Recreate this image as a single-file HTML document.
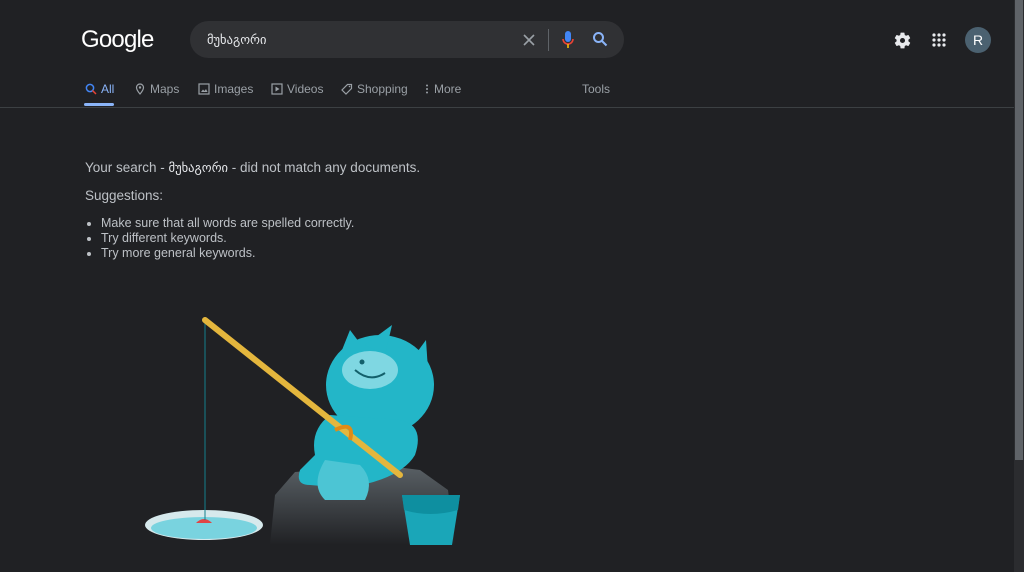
<!DOCTYPE html>
<html><head><meta charset="utf-8"><style>
*{margin:0;padding:0;box-sizing:border-box}
body{width:1024px;height:572px;background:#202124;font-family:"Liberation Sans",Arial,sans-serif;color:#bdc1c6;position:relative;overflow:hidden}
.logo{position:absolute;left:81px;top:26px;font-size:24px;color:#fff;letter-spacing:-0.8px}
.sb{position:absolute;left:190px;top:21px;width:434px;height:37px;background:#303134;border-radius:19px}
.q{position:absolute;left:17px;top:11px;font-size:12.5px;color:#e8eaed;font-family:"DejaVu Sans",sans-serif}
.tab{position:absolute;top:82px;font-size:12px;color:#9aa0a6;display:flex;align-items:center;gap:4px}
.line{position:absolute;left:0;top:107px;width:1014px;height:1px;background:#3c4043}
.txt{position:absolute;left:85px;font-size:13.5px;color:#bdc1c6}
ul{position:absolute;left:101px;top:216px;font-size:12.5px;color:#bdc1c6;line-height:15px;list-style:disc}
.scroll{position:absolute;left:1014px;top:0;width:10px;height:572px;background:#2b2c2f}
.thumb{position:absolute;left:1015px;top:0;width:8px;height:460px;background:#5f6368}
</style></head><body>
<div class="logo">Google</div>
<div class="sb"><div class="q">მუხაგორი</div>
<svg style="position:absolute;left:332px;top:12px" width="14" height="14"><path d="M2 2L12 12M12 2L2 12" stroke="#9aa0a6" stroke-width="1.6"/></svg>
<div style="position:absolute;left:358px;top:8px;width:1px;height:22px;background:#5f6368"></div>
<svg style="position:absolute;left:371px;top:9px" width="14" height="20"><rect x="4" y="1" width="6" height="11" rx="3" fill="#4285f4"/><path d="M2 9a5 5 0 0 0 10 0" stroke="#ea4335" stroke-width="1.6" fill="none"/><path d="M7 14v4" stroke="#fbbc05" stroke-width="1.6"/></svg>
<svg style="position:absolute;left:402px;top:10px" width="16" height="16"><circle cx="6.5" cy="6.5" r="4.5" stroke="#8ab4f8" stroke-width="2" fill="none"/><path d="M10 10l4.5 4.5" stroke="#8ab4f8" stroke-width="2"/></svg>
</div>
<svg style="position:absolute;left:893px;top:31px" width="19" height="19" viewBox="0 0 24 24"><path fill="#e8eaed" d="M19.4 13c.04-.33.06-.66.06-1s-.02-.67-.06-1l2.1-1.650c.2-.15.25-.42.12-.64l-2-3.460c-.12-.22-.39-.3-.61-.22l-2.490 1c-.52-.4-1.080-.73-1.690-.98l-.38-2.650A.49.49 0 0 0 14 2h-4c-.25 0-.46.18-.49.42l-.38 2.650c-.61.25-1.170.59-1.690.98l-2.490-1a.5.5 0 0 0-.61.22l-2 3.460c-.13.22-.07.49.12.64L4.570 11c-.04.33-.07.67-.07 1s.03.67.07 1l-2.110 1.650c-.19.15-.24.42-.12.64l2 3.460c.12.22.39.3.61.22l2.490-1c.52.4 1.080.73 1.690.98l.38 2.650c.03.24.24.42.49.42h4c.25 0 .46-.18.49-.42l.38-2.650c.61-.25 1.170-.59 1.690-.98l2.490 1c.23.09.49 0 .61-.22l2-3.460c.12-.22.07-.49-.12-.64z"/><circle cx="12" cy="12" r="3.2" fill="#202124"/></svg>
<svg style="position:absolute;left:932px;top:33px" width="14" height="14"><g fill="#e8eaed"><circle cx="2" cy="2" r="1.6"/><circle cx="7" cy="2" r="1.6"/><circle cx="12" cy="2" r="1.6"/><circle cx="2" cy="7" r="1.6"/><circle cx="7" cy="7" r="1.6"/><circle cx="12" cy="7" r="1.6"/><circle cx="2" cy="12" r="1.6"/><circle cx="7" cy="12" r="1.6"/><circle cx="12" cy="12" r="1.6"/></g></svg>
<div style="position:absolute;left:965px;top:27px;width:26px;height:26px;border-radius:50%;background:#4b6170;color:#fff;font-size:14px;text-align:center;line-height:26px">R</div>

<div class="tab" style="left:85px;color:#8ab4f8"><svg width="12" height="12"><circle cx="5" cy="5" r="3.6" stroke="#4285f4" stroke-width="1.5" fill="none"/><path d="M7.5 7.5l3.5 3.5" stroke="#ea4335" stroke-width="1.5"/></svg>All</div>
<div style="position:absolute;left:84px;top:103px;width:30px;height:3px;background:#8ab4f8;border-radius:2px"></div>
<div class="tab" style="left:134px"><svg width="12" height="12"><path d="M6 11C3 7.5 2.5 6 2.5 4.5a3.5 3.5 0 0 1 7 0C9.5 6 9 7.5 6 11z" stroke="#9aa0a6" fill="none" stroke-width="1.2"/><circle cx="6" cy="4.5" r="1.2" fill="#9aa0a6"/></svg>Maps</div>
<div class="tab" style="left:198px"><svg width="12" height="12"><rect x="1" y="1" width="10" height="10" stroke="#9aa0a6" fill="none" stroke-width="1.2"/><path d="M3 9l2-2.5 1.5 1.5L8 6l1.5 3z" fill="#9aa0a6"/></svg>Images</div>
<div class="tab" style="left:271px"><svg width="12" height="12"><rect x="1" y="1" width="10" height="10" stroke="#9aa0a6" fill="none" stroke-width="1.2"/><path d="M4.5 3.5v5l4-2.5z" fill="#9aa0a6"/></svg>Videos</div>
<div class="tab" style="left:341px"><svg width="12" height="12"><path d="M6.5 1.5H10.5V5.5L5 11 1 7z" stroke="#9aa0a6" fill="none" stroke-width="1.2"/><circle cx="8.5" cy="3.5" r=".8" fill="#9aa0a6"/></svg>Shopping</div>
<div class="tab" style="left:424px"><svg width="6" height="12"><g fill="#9aa0a6"><circle cx="3" cy="2.5" r="1"/><circle cx="3" cy="6" r="1"/><circle cx="3" cy="9.5" r="1"/></g></svg>More</div>
<div class="tab" style="left:582px">Tools</div>
<div class="line"></div>

<div class="txt" style="top:160px">Your search - <span style="color:#e8eaed;font-family:'DejaVu Sans',sans-serif;font-size:12.5px">მუხაგორი</span> - did not match any documents.</div>
<div class="txt" style="top:188px">Suggestions:</div>
<ul><li>Make sure that all words are spelled correctly.</li><li>Try different keywords.</li><li>Try more general keywords.</li></ul>

<svg style="position:absolute;left:130px;top:310px" width="340" height="240">
<defs><linearGradient id="r" x1="0" y1="0" x2="0" y2="1"><stop offset="0" stop-color="#5a6166"/><stop offset="1" stop-color="#202124"/></linearGradient></defs>
<path d="M145 185 L165 162 L250 155 L290 160 L318 180 L325 235 L140 235z" fill="url(#r)"/>
<ellipse cx="74" cy="215" rx="59" ry="15" fill="#d6e9ec"/>
<ellipse cx="74" cy="218" rx="53" ry="11" fill="#79d3df"/>
<path d="M66 213 Q74 205 82 213z" fill="#e04545"/>
<line x1="75" y1="10" x2="75" y2="210" stroke="#13808d" stroke-width="1"/>
<ellipse cx="250" cy="75" rx="54" ry="50" fill="#23b6c8"/>
<path d="M235 35 L262 15 L255 45z" fill="#23b6c8"/><path d="M285 45 L296 30 L298 60z" fill="#23b6c8"/><path d="M212 40 L220 20 L235 40z" fill="#23b6c8"/>
<ellipse cx="240" cy="60" rx="28" ry="19" fill="#7fd7e2"/>
<path d="M225 60 Q240 73 255 63" stroke="#13606b" stroke-width="2" fill="none"/>
<circle cx="232" cy="52" r="2.5" fill="#13606b"/>
<path d="M200 105 Q180 120 185 145 L170 160 Q165 175 180 175 L215 178 Q270 170 285 145 Q295 115 270 110z" fill="#23b6c8"/>
<path d="M195 150 Q180 175 195 190 L235 190 Q245 170 230 155z" fill="#4cc5d4"/>
<line x1="75" y1="10" x2="270" y2="165" stroke="#e4b63d" stroke-width="6" stroke-linecap="round"/>
<path d="M205 120 Q225 110 220 130" stroke="#e08b16" stroke-width="4" fill="none"/>
<path d="M272 185 L330 185 L322 235 L280 235z" fill="#1aa6b8"/>
<path d="M272 185 L330 185 L328 200 Q300 208 274 200z" fill="#0e8fa0"/>
</svg>
<div class="scroll"></div><div class="thumb"></div>
</body></html>
